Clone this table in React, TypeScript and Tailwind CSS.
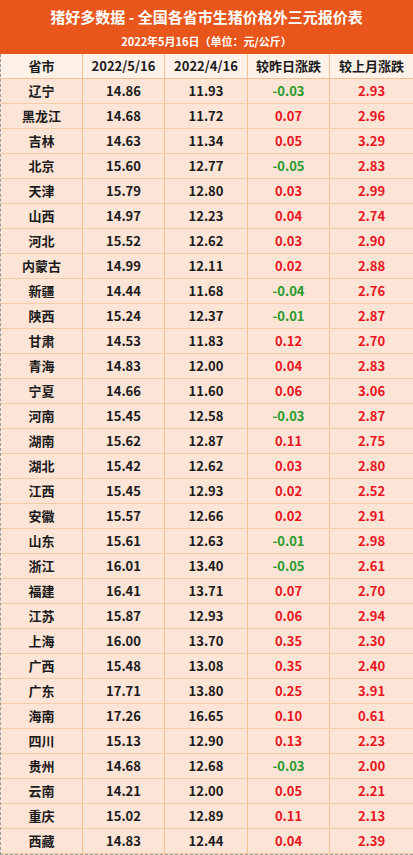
import React from "react";

const rows: [string, string, string, string, string][] = [
  ["辽宁", "14.86", "11.93", "-0.03", "2.93"],
  ["黑龙江", "14.68", "11.72", "0.07", "2.96"],
  ["吉林", "14.63", "11.34", "0.05", "3.29"],
  ["北京", "15.60", "12.77", "-0.05", "2.83"],
  ["天津", "15.79", "12.80", "0.03", "2.99"],
  ["山西", "14.97", "12.23", "0.04", "2.74"],
  ["河北", "15.52", "12.62", "0.03", "2.90"],
  ["内蒙古", "14.99", "12.11", "0.02", "2.88"],
  ["新疆", "14.44", "11.68", "-0.04", "2.76"],
  ["陕西", "15.24", "12.37", "-0.01", "2.87"],
  ["甘肃", "14.53", "11.83", "0.12", "2.70"],
  ["青海", "14.83", "12.00", "0.04", "2.83"],
  ["宁夏", "14.66", "11.60", "0.06", "3.06"],
  ["河南", "15.45", "12.58", "-0.03", "2.87"],
  ["湖南", "15.62", "12.87", "0.11", "2.75"],
  ["湖北", "15.42", "12.62", "0.03", "2.80"],
  ["江西", "15.45", "12.93", "0.02", "2.52"],
  ["安徽", "15.57", "12.66", "0.02", "2.91"],
  ["山东", "15.61", "12.63", "-0.01", "2.98"],
  ["浙江", "16.01", "13.40", "-0.05", "2.61"],
  ["福建", "16.41", "13.71", "0.07", "2.70"],
  ["江苏", "15.87", "12.93", "0.06", "2.94"],
  ["上海", "16.00", "13.70", "0.35", "2.30"],
  ["广西", "15.48", "13.08", "0.35", "2.40"],
  ["广东", "17.71", "13.80", "0.25", "3.91"],
  ["海南", "17.26", "16.65", "0.10", "0.61"],
  ["四川", "15.13", "12.90", "0.13", "2.23"],
  ["贵州", "14.68", "12.68", "-0.03", "2.00"],
  ["云南", "14.21", "12.00", "0.05", "2.21"],
  ["重庆", "15.02", "12.89", "0.11", "2.13"],
  ["西藏", "14.83", "12.44", "0.04", "2.39"],
];

const font = { fontFamily: '"Noto Sans CJK SC", "Noto Sans", sans-serif' };

export default function App() {
  return (
    <div className="w-[413px] h-[855px] bg-[#fbe5d8] overflow-hidden" style={font}>
      <div className="h-[54px] bg-[#e9561c] flex flex-col items-center text-white font-bold">
        <div className="text-[15px] leading-[22px] mt-[6px]">猪好多数据 - 全国各省市生猪价格外三元报价表</div>
        <div className="text-[11px] leading-[14px] mt-[6px]">2022年5月16日（单位：元/公斤）</div>
      </div>
      <div className="border-l border-b border-dashed border-l-[#9a9a9a] border-b-[#9a9a9a]">
        <div className="grid grid-cols-[82px_82px_83px_82px_1fr] h-[25px] bg-[#fdf1e8] border-b border-[#f4c08e] text-[13px] font-bold text-[#1a1a1a]">
          {["省市", "2022/5/16", "2022/4/16", "较昨日涨跌", "较上月涨跌"].map((h, i) => (
            <div key={i} className={`flex items-center justify-center ${i < 4 ? "border-r border-[#f4c08e]" : ""}`}>{h}</div>
          ))}
        </div>
        {rows.map((r, ri) => (
          <div key={ri} className="grid grid-cols-[82px_82px_83px_82px_1fr] h-[25px] bg-[#fce4d6] border-b border-[#f5cca4] text-[13px] font-bold text-[#1a1a1a]">
            <div className="flex items-center justify-center border-r border-[#f4c08e]">{r[0]}</div>
            <div className="flex items-center justify-center border-r border-[#f4c08e]">{r[1]}</div>
            <div className="flex items-center justify-center border-r border-[#f4c08e]">{r[2]}</div>
            <div className={`flex items-center justify-center border-r border-[#f4c08e] ${r[3].startsWith("-") ? "text-[#2a9a2a]" : "text-[#e8141e]"}`}>{r[3]}</div>
            <div className="flex items-center justify-center text-[#e8141e]">{r[4]}</div>
          </div>
        ))}
      </div>
    </div>
  );
}
